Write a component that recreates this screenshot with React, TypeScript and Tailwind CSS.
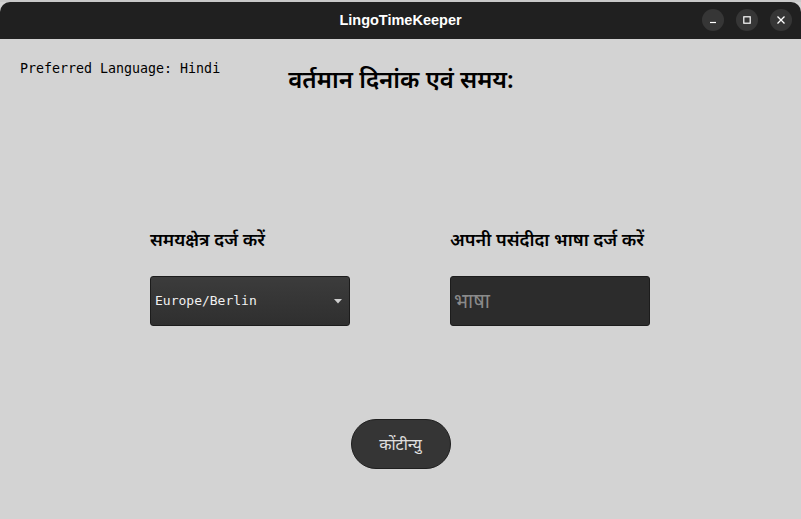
import React from 'react'

const hindi = { fontFamily: '"Noto Sans", "Noto Sans Devanagari", "Lohit Devanagari", sans-serif' }
const mono = { fontFamily: '"DejaVu Sans Mono", "Liberation Mono", monospace' }

const WinButton = ({ children }: { children: React.ReactNode }) => (
    <div className="w-[22px] h-[22px] rounded-full bg-[#363636] flex items-center justify-center">
        {children}
    </div>
)

export default function App() {
    return (
        <div className="w-[801px] h-[519px] bg-[#d3d3d3] flex flex-col overflow-hidden">
            {/* window titlebar */}
            <div className="h-[2px] bg-[#c9c9c9]" />
            <header className="h-[37px] bg-[#202020] rounded-tl-[10px] rounded-tr-[10px] relative flex items-center justify-center">
                <span className="text-white font-bold text-[14.5px]" style={{ fontFamily: '"Liberation Sans", sans-serif' }}>
                    LingoTimeKeeper
                </span>
                <div className="absolute right-[9px] top-[7px] flex gap-[12px]">
                    <WinButton>
                        <svg width="10" height="10" viewBox="0 0 10 10"><path d="M2 7.5h6" stroke="#fff" strokeWidth="1.2" /></svg>
                    </WinButton>
                    <WinButton>
                        <svg width="10" height="10" viewBox="0 0 10 10"><rect x="1.8" y="1.8" width="6.4" height="6.4" fill="none" stroke="#fff" strokeWidth="1.2" /></svg>
                    </WinButton>
                    <WinButton>
                        <svg width="10" height="10" viewBox="0 0 10 10"><path d="M1.5 1.5l7 7M8.5 1.5l-7 7" stroke="#fff" strokeWidth="1.3" /></svg>
                    </WinButton>
                </div>
            </header>

            {/* content */}
            <main className="flex-1 relative">
                <p className="absolute left-[20px] top-[20px] text-[13.3px] text-black" style={mono}>
                    Preferred Language: Hindi
                </p>
                <h1 className="text-center text-[24px] font-semibold text-black pt-[22px] pl-[1px]" style={hindi}>
                    वर्तमान दिनांक एवं समय:
                </h1>

                <section className="flex gap-[100px] pl-[150px] mt-[129px]">
                    <div className="w-[200px]">
                        <h3 className="text-[18px] font-semibold text-black mb-[23px]" style={hindi}>समयक्षेत्र दर्ज करें</h3>
                        <div className="h-[50px] rounded-[3px] border border-[#1c1c1c] bg-gradient-to-b from-[#3c3c3c] to-[#2f2f2f] flex items-center justify-between pl-[4px] pr-[7px]">
                            <span className="text-[13px] text-[#f0f0f0]" style={mono}>Europe/Berlin</span>
                            <svg width="8" height="5" viewBox="0 0 8 5"><path d="M0 0h8L4 4.5z" fill="#cfcfcf" /></svg>
                        </div>
                    </div>
                    <div className="w-[200px]">
                        <h3 className="text-[18px] font-semibold text-black mb-[23px]" style={hindi}>अपनी पसंदीदा भाषा दर्ज करें</h3>
                        <div className="h-[50px] rounded-[3px] border border-[#1c1c1c] bg-[#2c2c2c] flex items-center pl-[3px]">
                            <span className="text-[20px] text-[#8a8a8a]" style={hindi}>भाषा</span>
                        </div>
                    </div>
                </section>

                <div className="flex justify-center mt-[93px]">
                    <button className="w-[100px] h-[50px] rounded-full bg-[#353535] border border-[#1f1f1f] text-[#e0e0e0] text-[16px]" style={hindi}>
                        कोंटीन्यु
                    </button>
                </div>
            </main>
        </div>
    )
}
